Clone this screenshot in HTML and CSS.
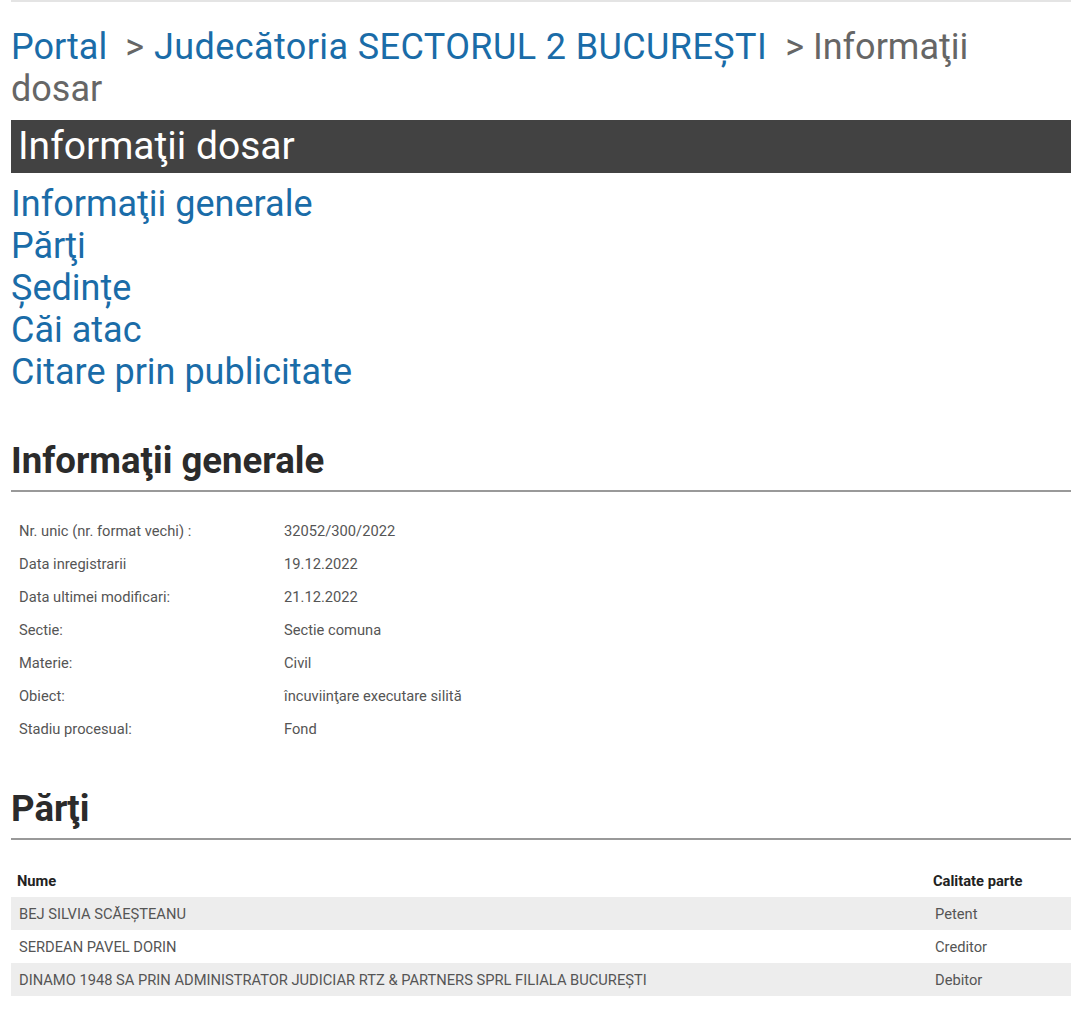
FILE: index.html
```html
<!DOCTYPE html>
<html lang="ro">
  <head>
    <meta charset="UTF-8" />
    <title>Informaţii dosar • Portal</title>
    <meta name="viewport" content="width=device-width, initial-scale=1.0" />
    <link rel="stylesheet" href="styles.css">
  </head>
  <body>
    <div class="page">
      <nav class="breadcrumb">
        <a href="#">Portal</a>
        <span class="sep">&gt;</span>
        <a href="#" class="court">Judecătoria SECTORUL 2 BUCUREȘTI</a>
        <span class="sep">&gt; Informaţii</span>
        <span class="current">dosar</span>
      </nav>

      <h1 class="title-bar">Informaţii dosar</h1>

      <ul class="toc">
        <li><a href="#generale">Informaţii generale</a></li>
        <li><a href="#parti">Părţi</a></li>
        <li><a href="#">Ședințe</a></li>
        <li><a href="#">Căi atac</a></li>
        <li><a href="#">Citare prin publicitate</a></li>
      </ul>

      <!-- general info -->
      <h2 class="section-title" id="generale">Informaţii generale</h2>
      <table class="info">
        <tr><td>Nr. unic (nr. format vechi) :</td><td>32052/300/2022</td></tr>
        <tr><td>Data inregistrarii</td><td>19.12.2022</td></tr>
        <tr><td>Data ultimei modificari:</td><td>21.12.2022</td></tr>
        <tr><td>Sectie:</td><td>Sectie comuna</td></tr>
        <tr><td>Materie:</td><td>Civil</td></tr>
        <tr><td>Obiect:</td><td>încuviinţare executare silită</td></tr>
        <tr><td>Stadiu procesual:</td><td>Fond</td></tr>
      </table>

      <!-- parties -->
      <h2 class="section-title" id="parti">Părţi</h2>
      <table class="parties">
        <thead>
          <tr><th>Nume</th><th class="role">Calitate parte</th></tr>
        </thead>
        <tbody>
          <tr><td>BEJ SILVIA SCĂEȘTEANU</td><td class="role">Petent</td></tr>
          <tr><td>SERDEAN PAVEL DORIN</td><td class="role">Creditor</td></tr>
          <tr><td>DINAMO 1948 SA PRIN ADMINISTRATOR JUDICIAR RTZ &amp; PARTNERS SPRL FILIALA BUCUREȘTI</td><td class="role">Debitor</td></tr>
        </tbody>
      </table>
    </div>
  </body>
</html>
```

FILE: styles.css
```css
/* --- Reset & base --- */
*, *::before, *::after {
  box-sizing: border-box;
  margin: 0;
  padding: 0;
}
body {
  font-family: Roboto, "Liberation Sans", Arial, sans-serif;
  color: #333;
  background: #fff;
}
a {
  color: #1a6ca8;
  text-decoration: none;
}

.page {
  margin: 0 9px 0 11px;
  border-top: 2px solid #e4e4e4;
  padding-top: 24px;
}

/* --- Breadcrumb --- */
.breadcrumb {
  display: flex;
  flex-wrap: wrap;
  column-gap: 10px;
  max-width: 990px;
  font-size: 36px;
  line-height: 42px;
  color: #666;
}
.breadcrumb .sep {
  padding-left: 8px;
}
.breadcrumb .court {
  letter-spacing: 0.4px;
}

/* --- Dark title bar --- */
.title-bar {
  margin-top: 10px;
  background: #424242;
  color: #fff;
  font-size: 39px;
  font-weight: 400;
  line-height: 53px;
  padding-left: 7px;
}

/* --- Table of contents --- */
.toc {
  list-style: none;
  margin-top: 10px;
  font-size: 36px;
  line-height: 42px;
}

/* --- Section headings --- */
.section-title {
  margin-top: 46px;
  font-size: 36.6px;
  font-weight: 700;
  line-height: 44px;
  color: #2b2b2b;
  padding-bottom: 7px;
  border-bottom: 2px solid #999;
}

/* --- General info table --- */
.info {
  border-collapse: collapse;
  margin-top: 22px;
  font-size: 14.7px;
  color: #555;
}
.info td {
  height: 33px;
  padding: 0 8px;
}
.info td:first-child {
  width: 265px;
}

/* --- Parties table --- */
#parti {
  margin-top: 42px;
}
.parties {
  width: 100%;
  border-collapse: collapse;
  margin-top: 24px;
  font-size: 14.7px;
  color: #555;
  text-align: left;
}
.parties th {
  color: #222;
  font-weight: 700;
  height: 33px;
  padding: 0 6px;
}
.parties td {
  height: 33px;
  padding: 0 8px;
}
.parties tbody tr:nth-child(odd) {
  background: #ededed;
}
.parties .role {
  width: 144px;
}
```
